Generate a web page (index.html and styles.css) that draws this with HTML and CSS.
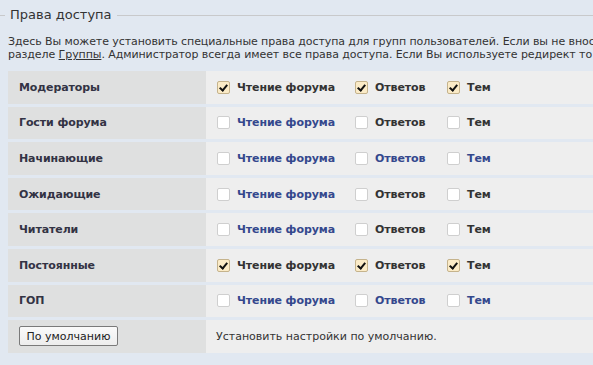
FILE: index.html
```html
<!DOCTYPE html>
<html lang="ru">
<head>
<meta charset="utf-8">
<link rel="stylesheet" href="styles.css">
</head>
<body>
<div class="page">
  <div class="legend"><span class="legend-text">Права доступа</span></div>
  <p class="desc">Здесь Вы можете установить специальные права доступа для групп пользователей. Если вы не вносите изменения, будут использованы права по умолчанию, заданные в<br>разделе <a href="#" class="link">Группы</a>. Администратор всегда имеет все права доступа. Если Вы используете редирект то активируйте только чтение форума.</p>
  <div class="table">
    <div class="row">
      <div class="cell-name">Модераторы</div>
      <div class="cell-perms">
        <label class="perm"><span class="cb checked"></span><span class="lbl">Чтение форума</span></label>
        <label class="perm p2"><span class="cb checked"></span><span class="lbl">Ответов</span></label>
        <label class="perm"><span class="cb checked"></span><span class="lbl">Тем</span></label>
      </div>
    </div>
    <div class="row">
      <div class="cell-name">Гости форума</div>
      <div class="cell-perms">
        <label class="perm"><span class="cb"></span><span class="lbl blue">Чтение форума</span></label>
        <label class="perm p2"><span class="cb"></span><span class="lbl">Ответов</span></label>
        <label class="perm"><span class="cb"></span><span class="lbl">Тем</span></label>
      </div>
    </div>
    <div class="row">
      <div class="cell-name">Начинающие</div>
      <div class="cell-perms">
        <label class="perm"><span class="cb"></span><span class="lbl blue">Чтение форума</span></label>
        <label class="perm p2"><span class="cb"></span><span class="lbl blue">Ответов</span></label>
        <label class="perm"><span class="cb"></span><span class="lbl blue">Тем</span></label>
      </div>
    </div>
    <div class="row">
      <div class="cell-name">Ожидающие</div>
      <div class="cell-perms">
        <label class="perm"><span class="cb"></span><span class="lbl blue">Чтение форума</span></label>
        <label class="perm p2"><span class="cb"></span><span class="lbl">Ответов</span></label>
        <label class="perm"><span class="cb"></span><span class="lbl">Тем</span></label>
      </div>
    </div>
    <div class="row">
      <div class="cell-name">Читатели</div>
      <div class="cell-perms">
        <label class="perm"><span class="cb"></span><span class="lbl blue">Чтение форума</span></label>
        <label class="perm p2"><span class="cb"></span><span class="lbl">Ответов</span></label>
        <label class="perm"><span class="cb"></span><span class="lbl">Тем</span></label>
      </div>
    </div>
    <div class="row">
      <div class="cell-name">Постоянные</div>
      <div class="cell-perms">
        <label class="perm"><span class="cb checked"></span><span class="lbl">Чтение форума</span></label>
        <label class="perm p2"><span class="cb checked"></span><span class="lbl">Ответов</span></label>
        <label class="perm"><span class="cb checked"></span><span class="lbl">Тем</span></label>
      </div>
    </div>
    <div class="row">
      <div class="cell-name">ГОП</div>
      <div class="cell-perms">
        <label class="perm"><span class="cb"></span><span class="lbl blue">Чтение форума</span></label>
        <label class="perm p2"><span class="cb"></span><span class="lbl blue">Ответов</span></label>
        <label class="perm"><span class="cb"></span><span class="lbl blue">Тем</span></label>
      </div>
    </div>
    <div class="row">
      <div class="cell-name"><button class="btn" type="button">По умолчанию</button></div>
      <div class="cell-perms plain">Установить настройки по умолчанию.</div>
    </div>
  </div>
</div>
</body>
</html>
```
FILE: styles.css
```css
html, body {
  margin: 0;
  padding: 0;
}
body {
  background: #e1e8f1;
  overflow: hidden;
  font-family: "DejaVu Sans", Verdana, sans-serif;
  color: #333333;
  width: 593px;
  height: 365px;
}
.page {
  width: 1100px;
  padding-top: 7px;
}
.legend {
  display: flex;
  align-items: center;
  height: 16px;
}
.legend::before {
  content: "";
  width: 5px;
  border-top: 1px solid #c8c9cb;
}
.legend::after {
  content: "";
  flex: 1;
  border-top: 1px solid #c8c9cb;
}
.legend-text {
  font-size: 13px;
  padding: 0 5px;
  color: #333333;
  line-height: 16px;
}
.desc {
  margin: 12px 0 0 8px;
  font-size: 11px;
  line-height: 13px;
  letter-spacing: -0.08px;
  white-space: nowrap;
  color: #333333;
}
.link {
  color: #333333;
  text-decoration: underline;
}
.table {
  margin: 10px 0 0 8px;
  display: flex;
  flex-direction: column;
  gap: 3px;
}
.row {
  display: flex;
  height: 32.6px;
}
.cell-name {
  width: 187px;
  padding-left: 11px;
  background: #dfe0e0;
  display: flex;
  align-items: center;
  font-size: 11px;
  font-weight: bold;
  letter-spacing: -0.1px;
  color: #333344;
}
.cell-perms {
  flex: 1;
  background: #eeeeee;
  display: flex;
  align-items: center;
  padding-left: 11px;
  font-size: 11px;
  font-weight: bold;
}
.cell-perms.plain {
  font-weight: normal;
  color: #333333;
  padding-left: 10px;
}
.perm {
  display: flex;
  align-items: center;
  gap: 7px;
  width: 138px;
}
.perm.p2 {
  width: 92px;
}
.cb {
  box-sizing: border-box;
  width: 13px;
  height: 13px;
  border: 1px solid #cfcfcf;
  border-radius: 2px;
  background: #ffffff;
  position: relative;
}
.cb.checked {
  background: #fbebc7;
  border-color: #c5b38c;
}
.cb.checked::after {
  content: "";
  position: absolute;
  left: 3px;
  top: 1px;
  width: 3px;
  height: 6px;
  border-right: 2px solid #111111;
  border-bottom: 2px solid #111111;
  transform: rotate(40deg);
}
.lbl {
  color: #333333;
  letter-spacing: -0.1px;
}
.lbl.blue {
  color: #34488d;
}
.btn {
  font-family: "DejaVu Sans", Verdana, sans-serif;
  font-size: 11px;
  color: #222222;
  background: linear-gradient(#fafafa, #ededed);
  border: 1px solid #7a7a7a;
  border-radius: 2px;
  height: 20px;
  width: 99px;
  padding: 0;
}
```
